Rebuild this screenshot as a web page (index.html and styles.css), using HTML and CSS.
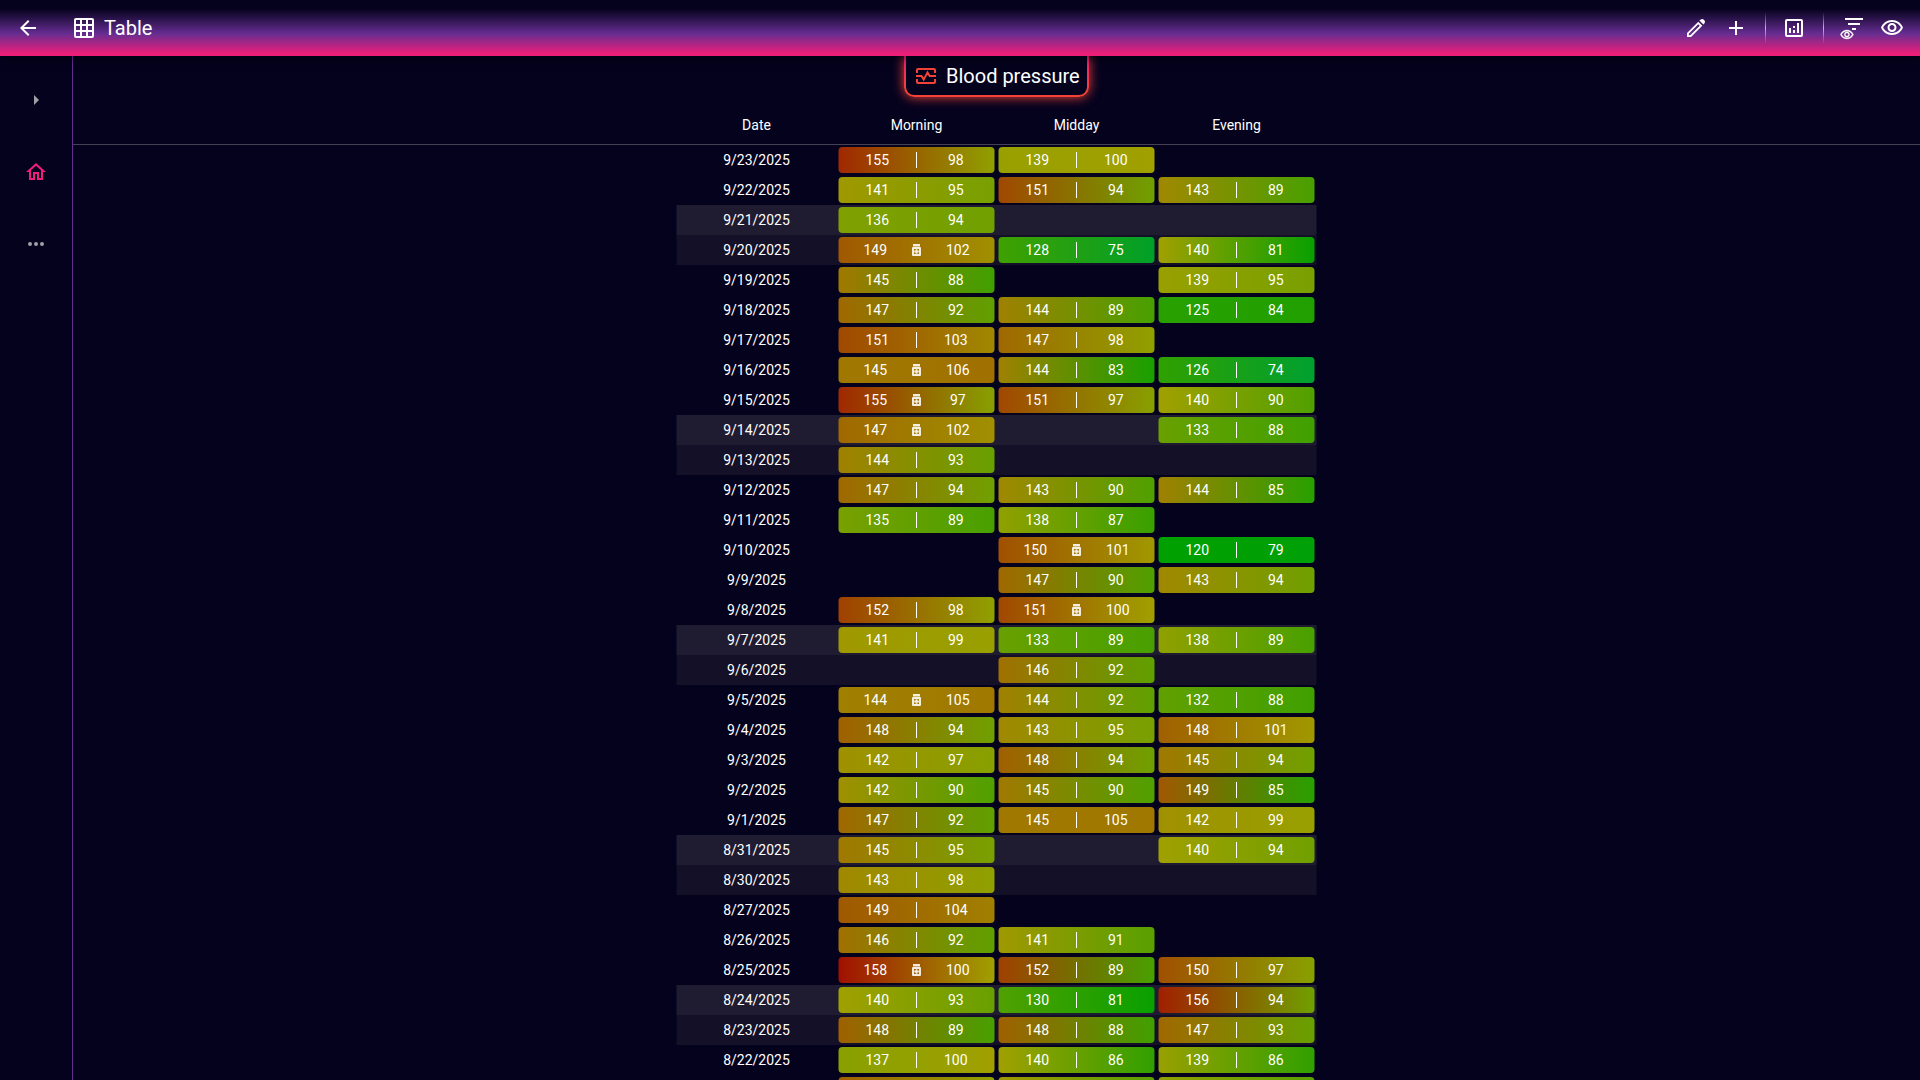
FILE: index.html
```html
<!DOCTYPE html>
<html lang="en">
<head>
<meta charset="utf-8">
<title>Table</title>
<link rel="stylesheet" href="styles.css">
</head>
<body>
<header class="appbar">
  <svg class="icon back" viewBox="0 0 24 24"><path d="M20 11H7.83l5.59-5.59L12 4l-8 8 8 8 1.41-1.41L7.83 13H20z"/></svg>
  <svg class="icon" viewBox="0 0 24 24"><path fill-rule="evenodd" d="M4 2h16a2 2 0 0 1 2 2v16a2 2 0 0 1-2 2H4a2 2 0 0 1-2-2V4a2 2 0 0 1 2-2zM4 4v4h4V4zm6 0v4h4V4zm6 0v4h4V4zM4 10v4h4v-4zm6 0v4h4v-4zm6 0v4h4v-4zM4 16v4h4v-4zm6 0v4h4v-4zm6 0v4h4v-4z"/></svg>
  <h1 class="title">Table</h1>
  <nav class="actions">
    <svg class="icon" viewBox="0 0 24 24"><path fill-rule="evenodd" d="M3 17 14.300 5.700l4 4L7 21H3zM4.800 17.800v1.400h1.400l9.500-9.500-1.400-1.400zM15.400 4.600l1.400-1.100a2.200 2.200 0 0 1 3 .200l.500.500a2.200 2.200 0 0 1 .200 3l-1.100 1.400z"/></svg>
    <svg class="icon plus" viewBox="0 0 24 24"><path d="M19 13h-6v6h-2v-6H5v-2h6V5h2v6h6z"/></svg>
    <span class="divider"></span>
    <svg class="icon" viewBox="0 0 24 24"><path fill-rule="evenodd" d="M19 3H5a2 2 0 0 0-2 2v14a2 2 0 0 0 2 2h14a2 2 0 0 0 2-2V5a2 2 0 0 0-2-2zm0 16H5V5h14zM7 12h2v5H7zM15 7h2v10h-2zM11 14h2v3h-2zM11 10h2v2h-2z"/></svg>
    <span class="divider"></span>
    <svg class="icon filter" viewBox="0 0 24 24"><path d="M5 2h18v2H5zM8 7h12v2H8zM12 12h4v2h-4z"/><g class="mini-eye" transform="translate(-.300 11.600) scale(.6)"><path d="M12 6c3.790 0 7.170 2.130 8.820 5.500C19.170 14.870 15.790 17 12 17s-7.170-2.130-8.820-5.500C4.830 8.130 8.210 6 12 6m0-2C7 4 2.730 7.110 1 11.500 2.730 15.890 7 19 12 19s9.270-3.110 11-7.500C21.270 7.110 17 4 12 4zm0 5c1.380 0 2.500 1.120 2.500 2.500S13.380 14 12 14s-2.500-1.120-2.500-2.500S10.620 9 12 9m0-2c-2.480 0-4.500 2.020-4.500 4.500S9.520 16 12 16s4.500-2.020 4.500-4.500S14.480 7 12 7z"/></g></svg>
    <svg class="icon" viewBox="0 0 24 24"><path d="M12 6c3.790 0 7.170 2.130 8.820 5.500C19.170 14.870 15.790 17 12 17s-7.170-2.130-8.820-5.500C4.830 8.130 8.210 6 12 6m0-2C7 4 2.730 7.110 1 11.500 2.730 15.890 7 19 12 19s9.270-3.110 11-7.500C21.270 7.110 17 4 12 4zm0 5c1.380 0 2.500 1.120 2.500 2.500S13.380 14 12 14s-2.500-1.120-2.500-2.500S10.620 9 12 9m0-2c-2.480 0-4.500 2.020-4.500 4.500S9.520 16 12 16s4.500-2.020 4.500-4.500S14.480 7 12 7z"/></svg>
  </nav>
</header>
<div class="layout">
  <aside class="sidebar">
    <svg class="side-icon" viewBox="0 0 24 24"><path d="m10 17 5-5-5-5z"/></svg>
    <svg class="side-icon active" viewBox="0 0 24 24"><path d="m12 5.690 5 4.500V18h-2v-6H9v6H7v-7.810zM12 3 2 12h3v8h6v-6h2v6h6v-8h3z"/></svg>
    <svg class="side-icon" viewBox="0 0 24 24"><path d="M6 10a2 2 0 1 0 0 4 2 2 0 0 0 0-4zm12 0a2 2 0 1 0 0 4 2 2 0 0 0 0-4zm-6 0a2 2 0 1 0 0 4 2 2 0 0 0 0-4z"/></svg>
  </aside>
  <main class="content">
    <div class="head">
      <div class="badge">
        <svg class="pulse" viewBox="0 0 24 24"><path d="M3 9V6a1 1 0 0 1 1-1h16a1 1 0 0 1 1 1v3M3 15v3a1 1 0 0 0 1 1h16a1 1 0 0 0 1-1v-3M2 12h5.500l2.200 3.600 3.800-7.200L15.700 12H22"/></svg>
        <span class="name">Blood pressure</span>
      </div>
      <div class="row columns"><span>Date</span><span>Morning</span><span>Midday</span><span>Evening</span></div>
    </div>
    <div class="rows" id="rows"></div>
  </main>
</div>
<script src="table.js"></script>
</body>
</html>
```
FILE: styles.css
```css
* { box-sizing: border-box; }
body {
  margin: 0;
  height: 100vh;
  overflow: hidden;
  display: flex;
  flex-direction: column;
  background: #05021e;
  color: #fff;
  font: 14px/20px Roboto, sans-serif;
}
.appbar {
  position: relative;
  z-index: 1;
  flex: none;
  height: 56px;
  display: flex;
  align-items: center;
  padding: 0 16px;
  background: linear-gradient(#05021e 0%, #05021e 16%, #662d91 60%, #ed1e79 96%);
  box-shadow: 0 2px 10px #0008;
}
.icon { width: 24px; height: 24px; fill: #fff; flex: none; display: block; }
.back { margin-right: 32px; }
.title { margin: 0 0 0 8px; font-size: 20px; line-height: 32px; font-weight: 400; }
.actions { margin-left: auto; display: flex; align-items: center; }
.plus { margin: 0 17px 0 16px; }
.mini-eye { stroke: #fff; stroke-width: .5; }
.divider { width: 1px; height: 32px; margin-right: 16px; background: linear-gradient(#fff0, #fffa, #fff0); }
.divider + .icon { margin-right: 17px; }
.divider + .filter { margin-right: 16px; }
.layout { flex: 1; min-height: 0; display: flex; }
.sidebar {
  width: 73px;
  flex: none;
  border-right: 1px solid #662d91;
  padding-top: 32px;
  display: flex;
  flex-direction: column;
  align-items: center;
  gap: 48px;
}
.side-icon { width: 24px; height: 24px; fill: #a09fa8; flex: none; }
.side-icon.active { fill: #ed1e79; }
.content { flex: 1; min-width: 0; display: flex; flex-direction: column; }
.head {
  flex: none;
  height: 89px;
  border-bottom: 1px solid #434153;
  display: flex;
  flex-direction: column;
  align-items: center;
}
.badge {
  width: 185px;
  height: 41px;
  display: flex;
  align-items: center;
  gap: 8px;
  padding: 0 8px;
  border: 2px solid transparent;
  border-top: 0;
  border-radius: 0 0 10px 10px;
  background:
    linear-gradient(#05021e, #05021e) padding-box,
    linear-gradient(#ed1e79, #f44336 85%) border-box;
  box-shadow: 0 0 12px #f44336;
  font-size: 20px;
  white-space: nowrap;
}
.pulse { width: 24px; height: 24px; fill: none; stroke: #f44336; stroke-width: 2; flex: none; }
.name { padding-top: 1px; }
.row {
  display: grid;
  grid-template-columns: repeat(4, 160px);
  align-items: center;
  text-align: center;
  height: 30px;
}
.columns { margin-top: 13px; }
.rows {
  display: flex;
  flex-direction: column;
  align-items: center;
  margin-right: 1px;
  transform: translateX(.5px);
}
.saturday { background: #131027; }
.sunday { background: #1f1c32; }
.chip {
  --from: hsl(calc((160 - var(--sys)) * 3) 100% 31.4%);
  --to: hsl(calc((120 - var(--dia)) * 3) 100% 31.4%);
  margin: 0 2px;
  height: 26px;
  border-radius: 4px;
  display: flex;
  align-items: center;
  background: linear-gradient(90deg, var(--from), var(--to));
}
.bar { width: 1px; height: 16px; background: #fff; transform: translateX(-.5px); }
.value { flex: 1; }
.jar { width: 9px; height: 12px; fill: #fff; opacity: .88; flex: none; transform: translateX(-.5px); }
```
FILE: table.js
```js
// Each line: date, then morning, midday and evening readings; "m" marks medication.
const data = `9/23 155/98 139/100 -
9/22 141/95 151/94 143/89
9/21 136/94 - -
9/20 149/102m 128/75 140/81
9/19 145/88 - 139/95
9/18 147/92 144/89 125/84
9/17 151/103 147/98 -
9/16 145/106m 144/83 126/74
9/15 155/97m 151/97 140/90
9/14 147/102m - 133/88
9/13 144/93 - -
9/12 147/94 143/90 144/85
9/11 135/89 138/87 -
9/10 - 150/101m 120/79
9/9 - 147/90 143/94
9/8 152/98 151/100m -
9/7 141/99 133/89 138/89
9/6 - 146/92 -
9/5 144/105m 144/92 132/88
9/4 148/94 143/95 148/101
9/3 142/97 148/94 145/94
9/2 142/90 145/90 149/85
9/1 147/92 145/105 142/99
8/31 145/95 - 140/94
8/30 143/98 - -
8/27 149/104 - -
8/26 146/92 141/91 -
8/25 158/100m 152/89 150/97
8/24 140/93 130/81 156/94
8/23 148/89 148/88 147/93
8/22 137/100 140/86 139/86
8/21 148/98 141/91 138/91`;

const jar = '<svg class="jar" viewBox="0 0 9 12"><path fill-rule="evenodd" d="M1 0h7v2.600H1zM1 3h7a1 1 0 0 1 1 1v7a1 1 0 0 1-1 1H1a1 1 0 0 1-1-1V4a1 1 0 0 1 1-1zM2 5v5h5V5zM3.600 5.200h1.800v1.400H6.800v1.800H5.400v1.400H3.600V8.400H2.200V6.600h1.400z"/></svg>';

function chip(reading) {
  if (reading === '-') return '<span></span>';
  const med = reading.endsWith('m');
  const [sys, dia] = reading.replace('m', '').split('/');
  return `<div class="chip" style="--sys:${sys};--dia:${dia}"><span class="value">${sys}</span>${med ? jar : '<span class="bar"></span>'}<span class="value">${dia}</span></div>`;
}

document.getElementById('rows').innerHTML = data.split('\n').map(line => {
  const [date, ...readings] = line.split(' ');
  const day = new Date(date + '/2025').getDay();
  const tone = day === 0 ? ' sunday' : day === 6 ? ' saturday' : '';
  return `<div class="row${tone}"><span>${date}/2025</span>${readings.map(chip).join('')}</div>`;
}).join('');
```
